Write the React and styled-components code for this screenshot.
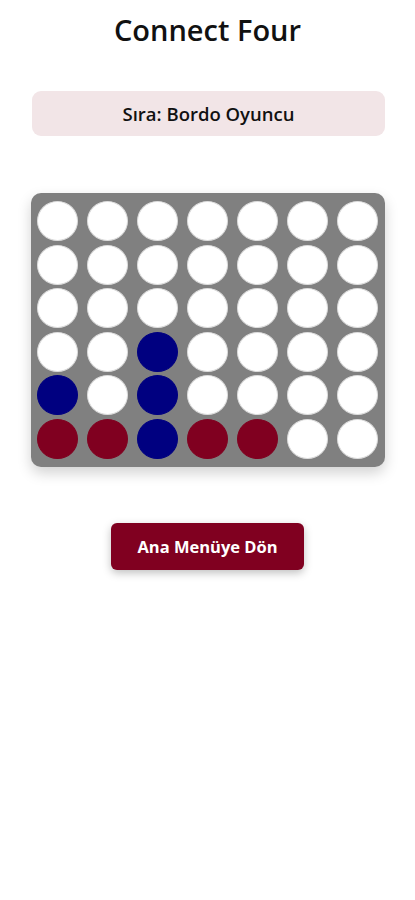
import styled, { createGlobalStyle } from "styled-components"

const GlobalStyle = createGlobalStyle`
  body {
    margin: 0;
    background: #fff;
    font-family: "Open Sans", "Noto Sans", sans-serif;
    color: #111;
  }
`

const Page = styled.div`
  width: 415px;
  min-height: 900px;
  display: flex;
  flex-direction: column;
  align-items: center;
  padding-top: 10px;
  box-sizing: border-box;
`

const Title = styled.h1`
  margin: 0;
  font-size: 29px;
  font-weight: 600;
  line-height: 40px;
  color: #111;
`

const Status = styled.div`
  margin-top: 41px;
  width: 353px;
  height: 45px;
  margin-left: 2px;
  border-radius: 9px;
  background: #f2e5e7;
  display: flex;
  align-items: center;
  justify-content: center;
  font-size: 18.5px;
  font-weight: 600;
`

const Board = styled.div`
  margin-top: 57px;
  width: 354px;
  box-sizing: border-box;
  padding: 8px 6px;
  background: #808080;
  border-radius: 10px;
  box-shadow: 0 6px 14px rgba(0, 0, 0, 0.18);
  display: grid;
  grid-template-columns: repeat(7, 41px);
  justify-content: space-between;
  row-gap: 3.5px;
`

const colors = {
  0: "#ffffff",
  1: "#800020",
  2: "#000080",
}

const Cell = styled.div`
  width: 41px;
  height: 40px;
  border-radius: 50%;
  box-sizing: border-box;
  background: ${(p) => colors[p.$v]};
  border: 1px solid ${(p) => (p.$v === 0 ? "#dcdcdc" : colors[p.$v])};
`

const BackButton = styled.button`
  margin-top: 56px;
  width: 193px;
  height: 47px;
  border: none;
  border-radius: 6px;
  background: #800020;
  color: #fff;
  font-family: "Open Sans", "Noto Sans", sans-serif;
  font-size: 16.5px;
  font-weight: 700;
  box-shadow: 0 3px 8px rgba(0, 0, 0, 0.25);
  cursor: pointer;
`

// 0 = empty, 1 = bordo, 2 = lacivert
const grid = [
  [0, 0, 0, 0, 0, 0, 0],
  [0, 0, 0, 0, 0, 0, 0],
  [0, 0, 0, 0, 0, 0, 0],
  [0, 0, 2, 0, 0, 0, 0],
  [2, 0, 2, 0, 0, 0, 0],
  [1, 1, 2, 1, 1, 0, 0],
]

export default function App() {
  return (
    <>
      <GlobalStyle />
      <Page>
        <Title>Connect Four</Title>
        <Status>Sıra: Bordo Oyuncu</Status>
        <Board>
          {grid.flatMap((row, r) =>
            row.map((v, c) => <Cell key={`${r}-${c}`} $v={v} />)
          )}
        </Board>
        <BackButton>Ana Menüye Dön</BackButton>
      </Page>
    </>
  )
}
